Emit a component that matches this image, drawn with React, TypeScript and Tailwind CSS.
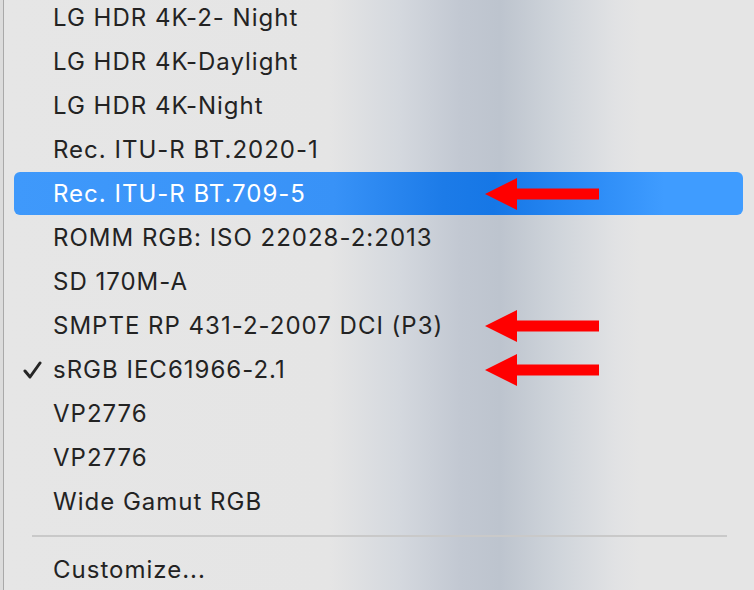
import React from 'react';

const items = [
  'LG HDR 4K-2- Night',
  'LG HDR 4K-Daylight',
  'LG HDR 4K-Night',
  'Rec. ITU-R BT.2020-1',
  'Rec. ITU-R BT.709-5',
  'ROMM RGB: ISO 22028-2:2013',
  'SD 170M-A',
  'SMPTE RP 431-2-2007 DCI (P3)',
  'sRGB IEC61966-2.1',
  'VP2776',
  'VP2776',
  'Wide Gamut RGB',
];

const HIGHLIGHT = 4;
const CHECKED = 8;
const ARROWS = [4, 7, 8];

// red annotation arrow drawn over the menu
function Arrow() {
  return (
    <svg width="114" height="32" viewBox="0 0 114 32" className="absolute left-[481px] top-1/2 -translate-y-1/2">
      <polygon points="0,16 32,0 32,10.5 114,10.5 114,21.5 32,21.5 32,32" fill="#ff0000" />
    </svg>
  );
}

function Check() {
  return (
    <svg width="19" height="18" viewBox="0 0 19 18" className="absolute left-[19px] top-1/2 -translate-y-1/2">
      <path d="M2 10 L7 16 L17 2" fill="none" stroke="#262626" strokeWidth="3" strokeLinecap="round" strokeLinejoin="round" />
    </svg>
  );
}

export default function App() {
  return (
    <div className="w-[754px] h-[590px] overflow-hidden flex bg-[linear-gradient(90deg,#e6e6e6_0px,#e5e5e5_330px,#d4d8de_400px,#c2c8d2_460px,#bdc4ce_500px,#d0d5db_560px,#e1e2e4_615px,#e5e5e5_640px)] font-['Inter','Liberation_Sans',sans-serif] text-[24px] tracking-[1px] text-[#232323]">
      <div className="w-[3px] shrink-0 bg-[#dcdcdc]" />
      <div className="w-px shrink-0 bg-[#a9a9a9]" />
      <div className="flex-1 flex flex-col -mt-[4px]">
        {items.map((label, i) => {
          if (i === HIGHLIGHT) {
            return (
              <div key={i} className="relative h-[44px] shrink-0">
                <div className="ml-[10px] mr-[11px] h-[43px] rounded-[6px] flex items-center pl-[39px] text-white bg-[linear-gradient(90deg,#3f99fb_0px,#3892f7_320px,#1c7be8_430px,#1677e6_480px,#2a8af5_570px,#3f9cff_650px)]">
                  {label}
                </div>
                <Arrow />
              </div>
            );
          }
          return (
            <div key={i} className="relative h-[44px] shrink-0 flex items-center pl-[49px]">
              {i === CHECKED && <Check />}
              {label}
              {ARROWS.includes(i) && <Arrow />}
            </div>
          );
        })}
        <div className="h-[24px] shrink-0 flex items-center pl-[28px] pr-[27px]">
          <div className="h-[2px] w-full bg-[#c9c9c9]" />
        </div>
        <div className="h-[44px] shrink-0 flex items-center pl-[49px]">Customize...</div>
      </div>
    </div>
  );
}
